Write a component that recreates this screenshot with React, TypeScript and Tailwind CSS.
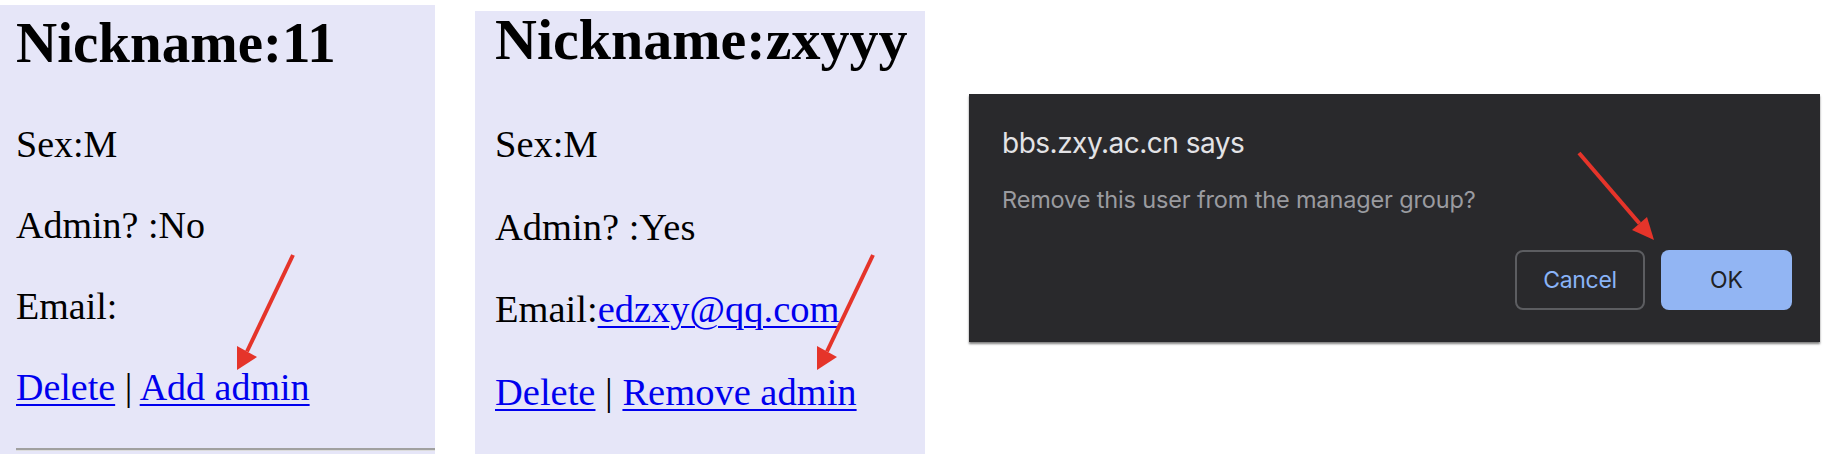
import React from 'react';

type Profile = {
  nickname: string;
  sex: string;
  admin: string;
  email?: string;
  action: string;
};

const linkCls = 'text-[#0000ee] underline decoration-[2px] underline-offset-[4px]';

function ProfileCard({ p, first }: { p: Profile; first: boolean }) {
  return (
    <div
      className={
        first
          ? 'mt-[5px] w-[435px] h-[449px] bg-[#e6e6f8] pl-[16px] pt-[9px] flex flex-col text-[38px]'
          : 'ml-[40px] mt-[11px] w-[450px] h-[443px] bg-[#e6e6f8] pl-[20px] flex flex-col text-[38.5px]'
      }
    >
      <h2
        className={
          first
            ? 'text-[57px] leading-[57px] font-bold text-black whitespace-nowrap'
            : 'text-[58px] leading-[57px] font-bold text-black whitespace-nowrap'
        }
      >
        Nickname:{p.nickname}
      </h2>
      <div className={first ? 'mt-[52px] flex flex-col gap-[39px]' : 'mt-[55px] flex flex-col gap-[40.5px]'}>
        <p className="leading-[42px]">Sex:{p.sex}</p>
        <p className="leading-[42px]">Admin? :{p.admin}</p>
        <p className="leading-[42px] whitespace-nowrap">
          Email:{p.email && <a className={linkCls}>{p.email}</a>}
        </p>
        <p className="leading-[42px] whitespace-nowrap">
          <a className={linkCls}>Delete</a> | <a className={linkCls}>{p.action}</a>
        </p>
      </div>
      {first && <div className="mt-[40px] border-t-[2px] border-[#a0a0a0] border-b border-b-[#dcdcdc]" />}
    </div>
  );
}

function ConfirmDialog() {
  return (
    <div className="ml-[44px] mt-[94px] w-[851px] h-[248px] bg-[#29292c] flex flex-col pl-[33px] pr-[28px] pt-[33px] pb-[32px] font-['Inter',sans-serif] shadow-[0_2px_2px_rgba(0,0,0,0.5)]">
      <div className="text-[28px] leading-[32px] text-[#e3e3e6] tracking-[-0.5px]">bbs.zxy.ac.cn says</div>
      <div className="mt-[27px] text-[23.5px] leading-[28px] text-[#9a9ba0] tracking-[-0.15px]">
        Remove this user from the manager group?
      </div>
      <div className="mt-auto flex justify-end gap-[16px]">
        <button className="w-[130px] h-[60px] rounded-[8px] border-[2px] border-[#5c5d61] text-[#8ab4f8] text-[23px] tracking-[-0.3px]">
          Cancel
        </button>
        <button className="w-[131px] h-[60px] rounded-[8px] bg-[#92b5f3] text-[#202124] text-[23px]">
          OK
        </button>
      </div>
    </div>
  );
}

function Arrow({ x1, y1, head }: { x1: number; y1: number; head: [number, number][] }) {
  const [a, b, tip] = head;
  const mx = (a[0] + b[0]) / 2;
  const my = (a[1] + b[1]) / 2;
  return (
    <g>
      <line x1={x1} y1={y1} x2={mx} y2={my} stroke="#e5342a" strokeWidth={4} />
      <polygon points={`${a[0]},${a[1]} ${b[0]},${b[1]} ${tip[0]},${tip[1]}`} fill="#e5342a" />
    </g>
  );
}

export default function App() {
  const profiles: Profile[] = [
    { nickname: '11', sex: 'M', admin: 'No', action: 'Add admin' },
    { nickname: 'zxyyy', sex: 'M', admin: 'Yes', email: 'edzxy@qq.com', action: 'Remove admin' },
  ];

  return (
    <div className="relative w-[1840px] h-[464px] bg-white overflow-hidden flex items-start font-['Liberation_Serif',serif] text-black">
      {profiles.map((p, i) => (
        <ProfileCard key={p.nickname} p={p} first={i === 0} />
      ))}
      <ConfirmDialog />

      {/* red annotation arrows */}
      <svg className="absolute inset-0 pointer-events-none" width="1840" height="464">
        <Arrow x1={293} y1={255} head={[[237, 346], [257, 357], [237, 370]]} />
        <Arrow x1={873} y1={255} head={[[817, 346], [837, 357], [817, 370]]} />
        <Arrow x1={1579} y1={153} head={[[1632, 230], [1647, 217], [1654, 240]]} />
      </svg>
    </div>
  );
}
